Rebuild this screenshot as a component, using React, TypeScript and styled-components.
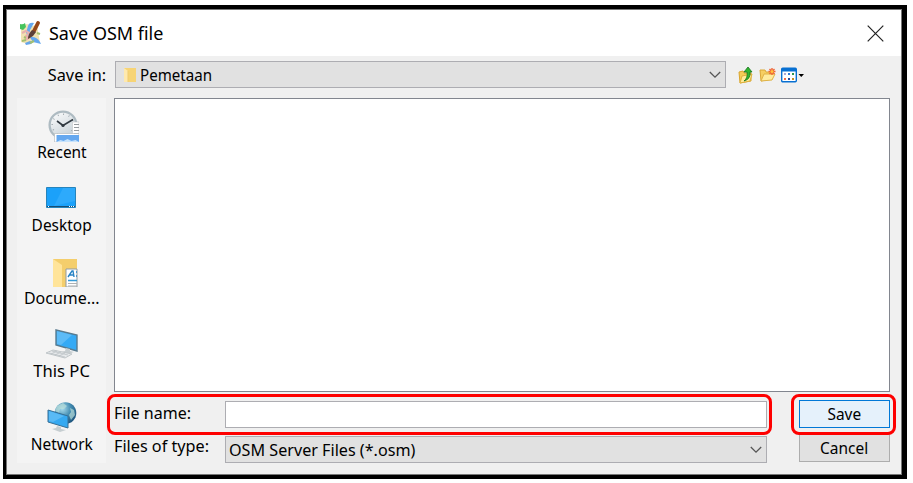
import React from "react";
import styled, { createGlobalStyle } from "styled-components";

const GlobalStyle = createGlobalStyle`
  * { box-sizing: border-box; }
  body { margin: 0; background: #fff; overflow: hidden; }
`;

const Page = styled.div`
  width: 913px;
  height: 483px;
  padding: 5px 0 0 3px;
  font-family: "Noto Sans", "Open Sans", sans-serif;
  font-size: 16.8px;
  line-height: 24px;
  color: #000;
`;

const Frame = styled.div`
  width: 904px;
  height: 474px;
  background: #000;
  padding: 4px 5px 4px 3px;
`;

const Dialog = styled.div`
  position: relative;
  width: 896px;
  height: 466px;
  border: 1px solid #777;
  background: #f0f0f0;
  display: flex;
  flex-direction: column;
`;

const TitleBar = styled.header`
  height: 46px;
  flex: none;
  background: #fff;
  display: flex;
  align-items: center;
  padding: 0 17px 0 12px;
`;

const Text = styled.span<{ $scale?: number; $origin?: string }>`
  display: inline-block;
  white-space: nowrap;
  transform: scaleX(${(p) => p.$scale ?? 0.92});
  transform-origin: ${(p) => p.$origin ?? "left"} center;
`;

const Title = styled(Text)`
  flex: 1;
  margin: 0 0 0 7px;
  font-size: 18.7px;
`;

const LookRow = styled.div`
  height: 42px;
  flex: none;
  display: flex;
  align-items: flex-start;
  padding-top: 5px;
`;

const LookLabel = styled.div`
  width: 108px;
  padding: 2px 9px 0 0;
  text-align: right;
`;

const Combo = styled.div<{ $width: number; $inset: number }>`
  width: ${(p) => p.$width}px;
  height: 27px;
  flex: none;
  border: 1px solid #adadb2;
  background: #e1e1e1;
  display: flex;
  align-items: center;
  padding: 0 3px 0 ${(p) => p.$inset}px;
`;

const ComboText = styled(Text)<{ $gap?: number }>`
  flex: 1;
  margin-left: ${(p) => p.$gap ?? 0}px;
`;

const Tools = styled.div`
  display: flex;
  align-items: center;
  height: 27px;
  margin-left: 12px;
  gap: 5px;
`;

const Content = styled.div`
  display: flex;
  flex: 1;
`;

const Places = styled.nav`
  width: 89px;
  height: 365px;
  margin-left: 10px;
  background: #f4f4f4;
  padding: 9px 0 0 1px;
`;

const Place = styled.div`
  height: 73px;
  display: flex;
  flex-direction: column;
  align-items: center;
`;

const PlaceIcon = styled.div<{ $right: number; $down: number }>`
  height: 33px;
  display: flex;
  align-items: flex-end;
  transform: translate(${(p) => p.$right}px, ${(p) => p.$down}px);
`;

const Main = styled.div`
  width: 776px;
  margin-left: 8px;
`;

const FileList = styled.div`
  height: 294px;
  border: 1px solid #82868f;
  background: #fff;
`;

const FieldRow = styled.div<{ $top: number }>`
  display: flex;
  align-items: flex-start;
  margin-top: ${(p) => p.$top}px;
`;

const FieldLabel = styled.label<{ $lift?: number }>`
  width: 111px;
  height: 27px;
  margin-top: -${(p) => p.$lift ?? 0}px;
`;

const Input = styled.input`
  width: 542px;
  height: 27px;
  border: 1px solid #adadb2;
  background: #fff;
  padding: 0 5px;
  font: inherit;
  outline: 0;
`;

const Button = styled.button<{ $primary?: boolean }>`
  width: 91px;
  height: 28px;
  margin: ${(p) => (p.$primary ? "-1px" : "-2px")} 0 0 32px;
  padding: 0;
  flex: none;
  border: 1px solid ${(p) => (p.$primary ? "#0078d7" : "#adadad")};
  background: ${(p) => (p.$primary ? "#e5f1fb" : "#e1e1e1")};
  font: inherit;
  line-height: 24px;
  color: #000;
`;

const Highlight = styled.div<{ $left: number; $width: number }>`
  position: absolute;
  left: ${(p) => p.$left}px;
  top: 384px;
  width: ${(p) => p.$width}px;
  height: 41px;
  border: 3px solid #fe0000;
  border-radius: 8px;
  pointer-events: none;
`;

const Chevron = () => (
  <svg width="14" height="10" viewBox="0 0 14 10" fill="none" stroke="#555" strokeWidth="1.3">
    <path d="M1.8 2 7 7.2 12.2 2" />
  </svg>
);

const MapIcon = () => (
  <svg width="23" height="25" viewBox="0 0 23 25">
    <path d="M2 5 8 3l5 2 5-1 3 18-6-2-6 3-7-2z" fill="#f0e2b2" />
    <path d="M1 3q3 1 5-1l1 4-3 3-3-1z" fill="#46c35d" />
    <path d="M9 5q1-4 6-3l-4 7q-1 4 2 7 5 0 8 5l1 2-8-2-4-6-3-3z" fill="#65a8ef" />
    <path d="m6 22 5-2 3 1-2 2-5 1z" fill="#65a5ec" />
    <path d="m3 12 4-2 3 2-3 3 3 2-4 2" fill="none" stroke="#e8b0ad" strokeWidth="2" />
    <path d="m5 16 2 1m4 5 4-2m3-8 3 1M3 20l4-1" stroke="#a4c070" strokeWidth="2" />
    <path d="m19 2-4 8" stroke="#964719" strokeWidth="3.8" strokeLinecap="round" />
    <path d="m13 9 4 2-3 4-5 3q0-5 4-9z" fill="#5d4039" />
  </svg>
);

const CloseIcon = () => (
  <svg width="17" height="17" viewBox="0 0 17 17" stroke="#222" strokeWidth="1.2">
    <path d="m.7.7 15.6 15.6M16.3.7.7 16.3" />
  </svg>
);

const FolderIcon = () => (
  <svg width="13" height="16" viewBox="0 0 13 16">
    <path d="M1 1h12v14H1z" fill="#f7d475" />
    <path d="m1 1 4 3v11H1z" fill="#ffe9ad" />
    <path d="M5 4v11" stroke="#efcb70" />
  </svg>
);

const UpIcon = () => (
  <svg width="16" height="18" viewBox="0 0 16 18">
    <path d="m1 6 4-1 1 2h7v8L2 17z" fill="#f4cc57" stroke="#d9a52f" />
    <path d="m2 17 2-7 10-2-2 7z" fill="#ffeb9a" stroke="#dfb13d" />
    <path d="M6 15q4-3 3-9H6l4-5 4 5h-2q1 7-6 9z" fill="#31b52f" stroke="#16751b" strokeWidth=".8" />
  </svg>
);

const NewFolderIcon = () => (
  <svg width="17" height="16" viewBox="0 0 17 16">
    <path d="M1 3h5l1 2h6v7L2 14z" fill="#f6cf62" stroke="#dba837" />
    <path d="m2 14 3-7h11l-3 6z" fill="#ffec9f" stroke="#dfb347" />
    <path d="M13 1v7M9.5 4.5h7M10.5 2l5 5m0-5-5 5" stroke="#f06434" strokeWidth="1.4" />
    <circle cx="13" cy="4.5" r="1.5" fill="#ffc33d" />
  </svg>
);

const ViewIcon = () => (
  <svg width="24" height="16" viewBox="0 0 24 16">
    <rect x=".7" y="1.2" width="14.6" height="13.6" rx="1" fill="#fff" stroke="#0870d2" strokeWidth="1.4" />
    <path d="M1 1h14v3.5H1z" fill="#0870d2" />
    <path d="M3 6h2v2H3z" fill="#aaa7d4" />
    <path d="M7 6h2v2H7z" fill="#307ad5" />
    <path d="M11 6h2v2h-2z" fill="#2d9651" />
    <path d="M3 11h2v2H3z" fill="#f26a49" />
    <path d="M7 11h2v2H7z" fill="#244a9a" />
    <path d="M11 11h2v2h-2z" fill="#c68d20" />
    <path d="M17.5 7h5.5l-2.75 3z" fill="#000" />
  </svg>
);

const RecentIcon = () => (
  <svg width="31" height="32" viewBox="0 0 31 32">
    <defs>
      <linearGradient id="clock" x2=".6" y2="1">
        <stop stopColor="#fff" />
        <stop offset="1" stopColor="#c8d2d8" />
      </linearGradient>
    </defs>
    <circle cx="15" cy="15" r="13.4" fill="url(#clock)" stroke="#aebbc2" strokeWidth="2.3" />
    <circle cx="15" cy="15" r="10.8" fill="none" stroke="#8d999f" strokeWidth="1.5" strokeDasharray=".8 4.85" />
    <path d="m9 11 6 4.5 10-6" fill="none" stroke="#303940" strokeWidth="1.6" />
    <circle cx="15" cy="15.5" r="1.6" fill="#303940" />
    <path d="M24.5 12H31v14h-6.5z" fill="#fff" stroke="#c4c8ca" strokeWidth=".6" />
    <path d="M26 14.5h5m-5 3h5m-5 3h5m-5 3h5" stroke="#969b9f" />
    <path d="M6.5 23.5H31V32H6.5z" fill="#fff" stroke="#aeb5b8" strokeWidth=".6" />
    <path d="M8.5 25H31v7H8.5z" fill="#65a8ef" />
    <path d="m8.5 32 4-2 3 1 4-2 4 2 4-1 3.5 2z" fill="#c6e3fc" />
  </svg>
);

const DesktopIcon = () => (
  <svg width="30" height="25" viewBox="0 0 30 25">
    <path d="M.5.5h29v20H.5z" fill="#1ba1fa" stroke="#2684bc" />
    <path d="M17 1h12v13L8 19z" fill="#50bbff" opacity=".35" />
    <path d="M1 19.5h28" stroke="#174e73" />
    <path d="M2 19.5h1m20 0h1m1 0h1m1 0h1" stroke="#fff" />
  </svg>
);

const DocumentsIcon = () => (
  <svg width="26" height="28" viewBox="0 0 26 28">
    <path d="M1 0h24v28H1z" fill="#f4ce6c" />
    <path d="m1 0 9 6v22H1z" fill="#ffe49a" />
    <path d="M14 10h11v18H14z" fill="#fff" stroke="#939da3" />
    <path d="m16 18 4-6h1l1 6m-5-2h5m2-3h1m-1 4h1" fill="none" stroke="#2783c5" strokeWidth="1.4" />
    <path d="M16 21.5h9" stroke="#359bd7" strokeWidth="1.5" />
    <path d="M16 24.5h9m-9 2.5h9" stroke="#aeb1b3" />
  </svg>
);

const ComputerIcon = () => (
  <svg width="33" height="30" viewBox="0 0 33 30">
    <path d="m11 1 21 5v16L11 16z" fill="#35aaf5" stroke="#597b8f" strokeWidth="1.4" />
    <path d="m12 2 15 4-11 10-4-1z" fill="#83cbfa" opacity=".5" />
    <path d="m21 19-1 3-4 1 7 2 6-2-4-1v-2z" fill="#c6cdd0" />
    <path d="m1 24 7-3 19 4-7 4z" fill="#e7eaec" stroke="#c0c6c9" />
    <path d="m4 24 16 4m-13-6 16 4m-17-1 6-3m-2 4 6-3m-2 4 6-3" stroke="#bbc2c5" strokeWidth=".8" />
  </svg>
);

const NetworkIcon = () => (
  <svg width="30" height="30" viewBox="0 0 30 30">
    <defs>
      <radialGradient id="globe" cx=".35" cy=".3" r=".8">
        <stop stopColor="#a9dced" />
        <stop offset=".5" stopColor="#438cb1" />
        <stop offset="1" stopColor="#174c75" />
      </radialGradient>
    </defs>
    <circle cx="18.5" cy="11" r="10.8" fill="url(#globe)" />
    <path d="m10 4 6-3 4 3-3 3-4 0-1 4-4-2zm13 2 4 2 1 5-4 5-2-5 2-3z" fill="#b8ddd9" opacity=".7" />
    <path d="m1 8 20 6v12L1 20z" fill="#35a9f1" stroke="#386f94" />
    <path d="m2 9 15 5-11 6-4-1z" fill="#86cefa" opacity=".45" />
    <path d="m10 24-1 2-4 1 8 3 6-2-5-1v-2z" fill="#c6ced1" />
  </svg>
);

const places = [
  { name: "Recent", Icon: RecentIcon, scale: 0.92, right: 1, down: 2 },
  { name: "Desktop", Icon: DesktopIcon, scale: 0.92, right: -1, down: -1 },
  { name: "Docume...", Icon: DocumentsIcon, scale: 0.95, right: 3, down: 1 },
  { name: "This PC", Icon: ComputerIcon, scale: 0.99, right: -1, down: 0 },
  { name: "Network", Icon: NetworkIcon, scale: 0.92, right: 0, down: 0 },
];

export default function App() {
  return (
    <Page>
      <GlobalStyle />
      <Frame>
        <Dialog>
          <TitleBar>
            <MapIcon />
            <Title $scale={0.962}>Save OSM file</Title>
            <CloseIcon />
          </TitleBar>
          <LookRow>
            <LookLabel>
              <Text $scale={0.97} $origin="right">Save in:</Text>
            </LookLabel>
            <Combo $width={611} $inset={7}>
              <FolderIcon />
              <ComboText $scale={0.9} $gap={4}>Pemetaan</ComboText>
              <Chevron />
            </Combo>
            <Tools>
              <UpIcon />
              <NewFolderIcon />
              <ViewIcon />
            </Tools>
          </LookRow>
          <Content>
            <Places>
              {places.map(({ name, Icon, scale, right, down }) => (
                <Place key={name}>
                  <PlaceIcon $right={right} $down={down}>
                    <Icon />
                  </PlaceIcon>
                  <Text $scale={scale} $origin="center">{name}</Text>
                </Place>
              ))}
            </Places>
            <Main>
              <FileList />
              <FieldRow $top={9}>
                <FieldLabel htmlFor="file-name">
                  <Text $scale={0.955}>File name:</Text>
                </FieldLabel>
                <Input id="file-name" />
                <Button $primary>
                  <Text $origin="center">Save</Text>
                </Button>
              </FieldRow>
              <FieldRow $top={8}>
                <FieldLabel $lift={2}>
                  <Text $scale={0.965}>Files of type:</Text>
                </FieldLabel>
                <Combo $width={542} $inset={3}>
                  <ComboText $scale={0.962}>OSM Server Files (*.osm)</ComboText>
                  <Chevron />
                </Combo>
                <Button>
                  <Text $origin="center">Cancel</Text>
                </Button>
              </FieldRow>
            </Main>
          </Content>
          <Highlight $left={100} $width={665} />
          <Highlight $left={784} $width={105} />
        </Dialog>
      </Frame>
    </Page>
  );
}
